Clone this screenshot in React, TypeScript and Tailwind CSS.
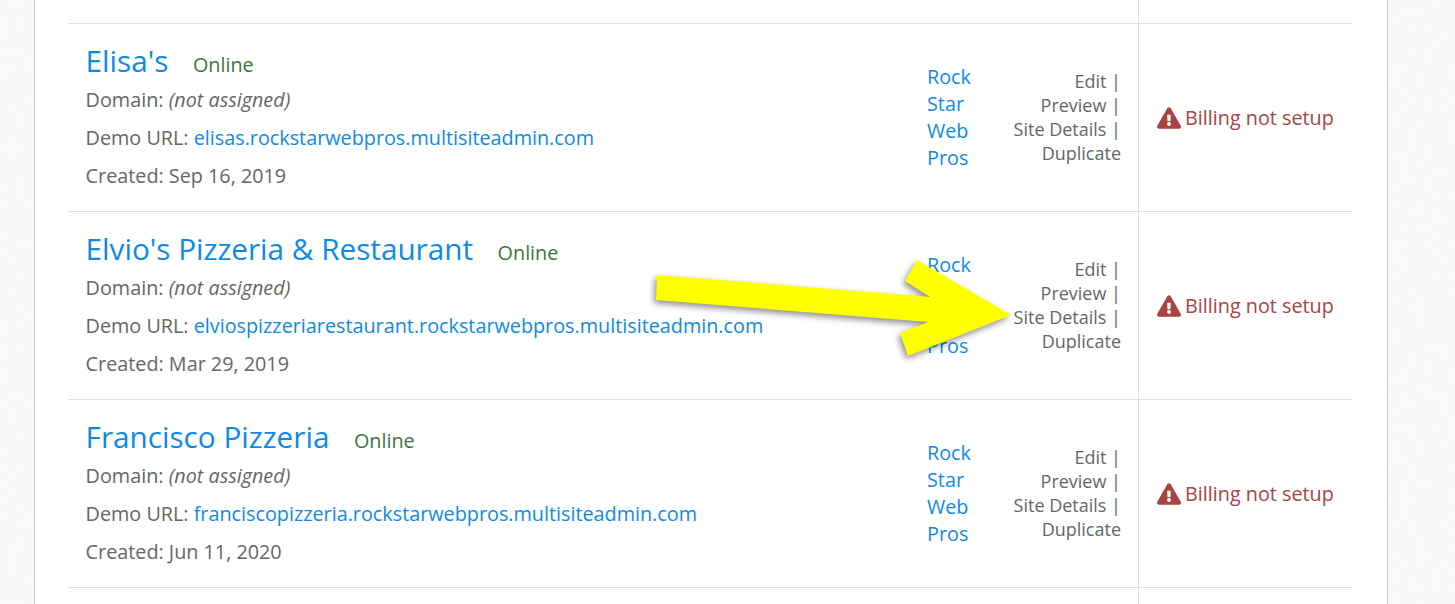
import { FaExclamationTriangle } from "react-icons/fa"

type Site = {
  name: string
  url: string
  created: string
}

const sites: Site[] = [
  { name: "Elisa's", url: "elisas.rockstarwebpros.multisiteadmin.com", created: "Sep 16, 2019" },
  {
    name: "Elvio's Pizzeria & Restaurant",
    url: "elviospizzeriarestaurant.rockstarwebpros.multisiteadmin.com",
    created: "Mar 29, 2019",
  },
  { name: "Francisco Pizzeria", url: "franciscopizzeria.rockstarwebpros.multisiteadmin.com", created: "Jun 11, 2020" },
]

function SiteRow({ site }: { site: Site }) {
  return (
    <div className="flex h-[188px] border-t border-[#dddddd]">
      <div className="flex-1 pl-[16.6px] pt-[18px]">
        <div className="flex h-[39px] items-center">
          <a className="-mt-[2px] text-[29.7px] leading-[38px] text-[#0d8ae8]">{site.name}</a>
          <span className="ml-[24.6px] mt-[7px] text-[19.8px] leading-[28px] text-[#3c763d]">Online</span>
        </div>
        <div className="text-[19.8px] leading-[38px]">
          Domain: <em>(not assigned)</em>
        </div>
        <div className="text-[19.8px] leading-[38px]">
          Demo URL: <a className="text-[#0d8ae8]">{site.url}</a>
        </div>
        <div className="text-[19.8px] leading-[38px]">Created: {site.created}</div>
      </div>
      <div className="flex w-[69px] -translate-y-px items-center text-[19.8px] leading-[27px] text-[#0d8ae8]">
        <a>
          Rock
          <br />
          Star
          <br />
          Web
          <br />
          Pros
        </a>
      </div>
      <div className="flex w-[142px] -translate-y-px items-center justify-end pr-[17px] text-right text-[18px] leading-[24px]">
        <div>
          <div>Edit |</div>
          <div>Preview |</div>
          <div>Site Details |</div>
          <div>Duplicate</div>
        </div>
      </div>
      <div className="flex w-[215px] items-center border-l border-[#dddddd] pl-[18px] text-[19.8px] text-[#a94442]">
        <FaExclamationTriangle size={24} className="mr-[4px] shrink-0" />
        Billing not setup
      </div>
    </div>
  )
}

export default function App() {
  return (
    <div className="relative h-[604px] w-[1455px] overflow-hidden bg-[#fafafa] font-['Open_Sans',sans-serif] text-[#666666]">
      {/* paper texture behind the panel */}
      <svg className="absolute inset-0" width="1455" height="604">
        <filter id="paper">
          <feTurbulence type="fractalNoise" baseFrequency="0.12" numOctaves="3" seed="4" />
          <feColorMatrix
            type="matrix"
            values="0 0 0 0 0.94  0 0 0 0 0.94  0 0 0 0 0.94  0.8 0 0 0 0"
          />
        </filter>
        <rect width="1455" height="604" filter="url(#paper)" />
      </svg>
      <div className="relative ml-[34px] h-full w-[1354px] border-x border-[#cccccc] bg-white px-[34px]">
        <div className="flex h-[23px] justify-end">
          <div className="w-[215px] border-l border-[#dddddd]" />
        </div>
        {sites.map((site) => (
          <SiteRow key={site.name} site={site} />
        ))}
        <div className="flex h-[30px] justify-end border-t border-[#dddddd]">
          <div className="w-[215px] border-l border-[#dddddd]" />
        </div>

        {/* annotation arrow drawn over the screenshot */}
        <svg
          className="absolute left-[-35px] top-0 overflow-visible"
          width="1455"
          height="604"
          style={{ filter: "drop-shadow(-2px 3px 3px rgba(0,0,0,0.45))" }}
        >
          <polygon
            points="657,275 930,297 905,281 917,260 1011,315 908,356 900,333 928,322 656,300"
            fill="#ffff00"
          />
        </svg>
      </div>
    </div>
  )
}
